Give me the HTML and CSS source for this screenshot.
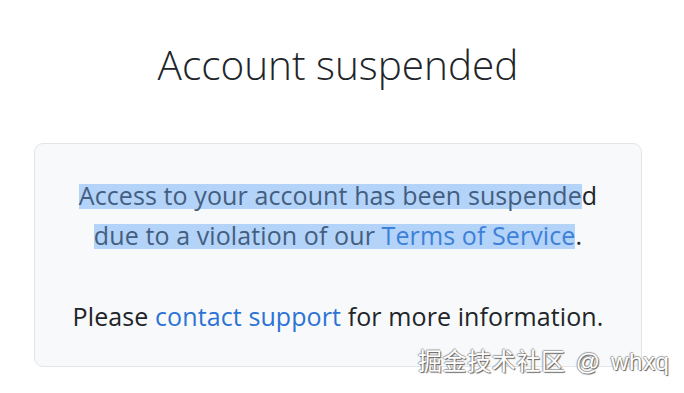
FILE: index.html
```html
<!DOCTYPE html>
<html lang="en">
<head>
<meta charset="utf-8">
<title>Account suspended</title>
<link rel="stylesheet" href="styles.css">
</head>
<body>
<main class="page">
  <h1 class="title">Account suspended</h1>
  <section class="card">
    <p class="msg"><span class="sel">Access to your account has been suspende</span>d<br><span class="sel">due to a violation of our <a class="link" href="#">Terms of Service</a></span>.</p>
    <p class="msg">Please <a class="link" href="#">contact support</a> for more information.</p>
  </section>
</main>
<div class="watermark">掘金技术社区 @ whxq</div>
</body>
</html>
```
FILE: styles.css
```css
html, body {
  margin: 0;
  padding: 0;
  background: #ffffff;
}
body {
  width: 684px;
  height: 393px;
  position: relative;
  overflow: hidden;
  font-family: "Open Sans", "Noto Sans", sans-serif;
  color: #212529;
}
.page {
  display: flex;
  flex-direction: column;
  padding: 0 42px 0 34px;
}
.title {
  margin: 37px 0 0 0;
  text-align: center;
  font-weight: 300;
  font-size: 40.5px;
  line-height: 56px;
  color: #212529;
}
.card {
  margin-top: 50px;
  width: 608px;
  box-sizing: border-box;
  background: #f8f9fa;
  border: 1px solid #e2e5e8;
  border-radius: 9px;
  padding: 31px 4px 30px;
  text-align: center;
}
.msg {
  margin: 0;
  font-size: 25px;
  line-height: 40px;
  letter-spacing: 0.1px;
}
.msg + .msg {
  margin-top: 41px;
}
.sel {
  background: linear-gradient(to bottom, transparent 0, transparent 6px, #b3d3f9 6px, #b3d3f9 31px, transparent 31px);
  color: #445e7f;
}
.link {
  color: #2b73d6;
  text-decoration: none;
}
.sel .link {
  color: #3d80d8;
}
.watermark {
  position: absolute;
  left: 418px;
  top: 348px;
  font-family: "Liberation Sans", "Noto Sans CJK SC", sans-serif;
  font-size: 24px;
  line-height: 28px;
  letter-spacing: 0.6px;
  word-spacing: 3px;
  color: #ffffff;
  text-shadow: 1px 1px 1px #5e5e5e, -1px 0 1px #a0a0a0, 0 -1px 1px #a0a0a0;
  white-space: nowrap;
}
```
